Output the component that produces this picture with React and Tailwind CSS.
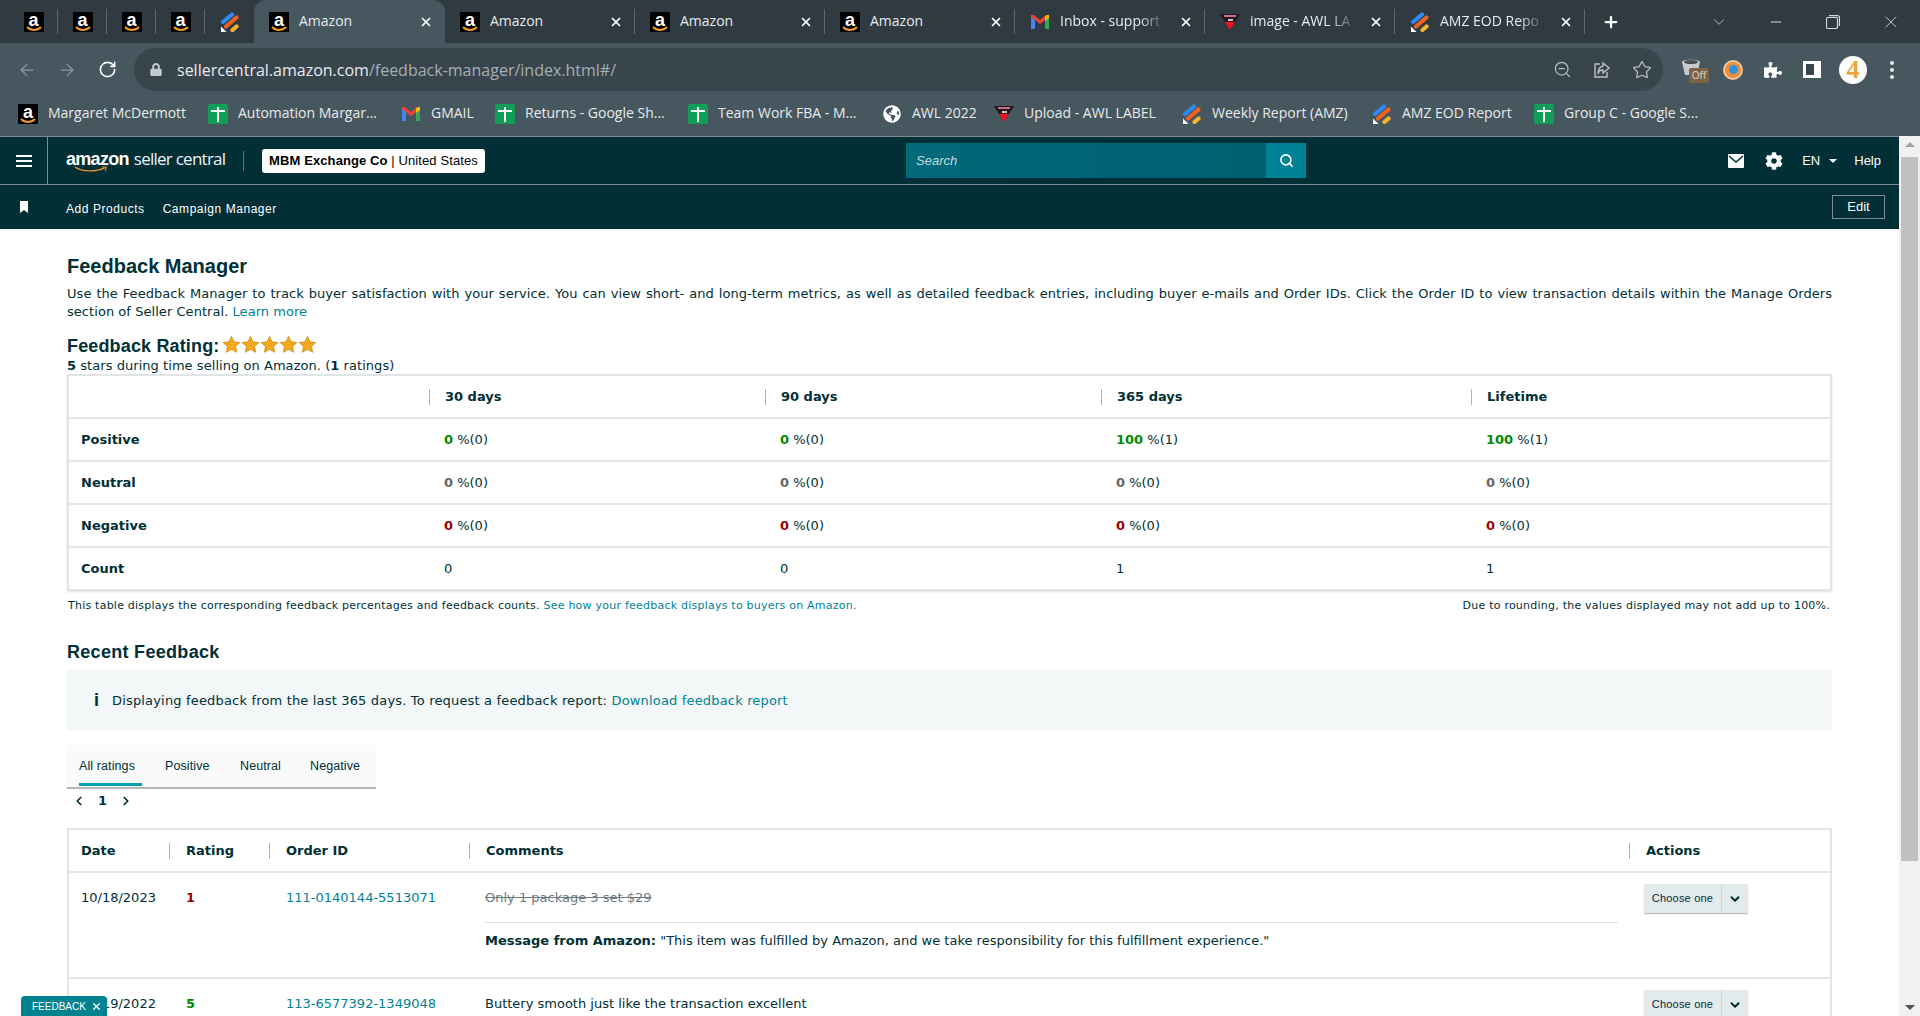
import { ArrowLeft, ArrowRight, RotateCw, Search, ZoomOut, Star, X, Plus, Minus, ChevronDown, ChevronLeft, ChevronRight } from 'lucide-react'
import { FaCog, FaPuzzlePiece, FaGlobeAmericas, FaLock } from 'react-icons/fa'

const chrome = "font-['Open_Sans',sans-serif]"
const body = "font-['DejaVu_Sans',sans-serif]"
const arial = "font-['Liberation_Sans',sans-serif]"

function AmazonIcon() {
  return (
    <div className="relative w-5 h-5 shrink-0 bg-black">
      <div className={`${arial} text-white font-bold text-[18px] leading-[18px] -mt-[1px] text-center`}>a</div>
      <svg viewBox="0 0 20 20" className="absolute inset-0 w-5 h-5">
        <path d="M3 15 C7 19 13 19 17 15" fill="none" stroke="#f09a1f" strokeWidth="2" />
      </svg>
    </div>
  )
}

function JiraIcon() {
  return (
    <svg viewBox="0 0 20 20" className="w-5 h-5 shrink-0">
      <path d="M3 10 L12 2.5" fill="none" stroke="#2f8af5" strokeWidth="4.2" strokeLinecap="round" />
      <path d="M6 14.5 L16.5 5.5" fill="none" stroke="#f2621f" strokeWidth="4.2" strokeLinecap="round" />
      <path d="M12.5 18 L16.5 14.5" fill="none" stroke="#f7b32b" strokeWidth="4.2" strokeLinecap="round" />
      <path d="M1 14.5 L6.5 20 H1 Z" fill="#ffffff" />
    </svg>
  )
}

function SheetIcon() {
  return (
    <div className="relative w-5 h-5 shrink-0 rounded-[2px] bg-[#0f9d58]">
      <div className="absolute left-[9px] top-[3px] w-[2px] h-[15px] bg-white" />
      <div className="absolute left-[3px] top-[6px] w-[14px] h-[2px] bg-white" />
    </div>
  )
}

function GmailIcon() {
  return (
    <svg viewBox="0 0 18 14" className="w-[18px] h-[14px] shrink-0">
      <path d="M0 2 L9 9 L18 2 V0 H15 L9 5 L3 0 H0 Z" fill="#ea4335" />
      <path d="M0 2 V14 H4 V5 Z" fill="#4285f4" />
      <path d="M18 2 V14 H14 V5 Z" fill="#34a853" />
      <path d="M14 1.5 L16 0 H18 V3 L14 6 Z" fill="#fbbc04" />
    </svg>
  )
}

function AwlIcon() {
  return (
    <svg viewBox="0 0 20 16" className="w-5 h-4 shrink-0">
      <path d="M0 0 H20 L10 16 Z" fill="#241a1e" />
      <rect x="4" y="1" width="12" height="2" fill="#c96d8d" />
      <rect x="8" y="5" width="5" height="2" fill="#e6b8c4" />
      <path d="M5 8 H15 L10 16 Z" fill="#ee1622" />
    </svg>
  )
}

function GlobeIcon() {
  return <FaGlobeAmericas className="w-[18px] h-[18px] shrink-0 text-white" />
}

const tabs = [
  { icon: <AmazonIcon />, label: 'Amazon', active: true },
  { icon: <AmazonIcon />, label: 'Amazon' },
  { icon: <AmazonIcon />, label: 'Amazon' },
  { icon: <AmazonIcon />, label: 'Amazon' },
  { icon: <GmailIcon />, label: 'Inbox - support' },
  { icon: <AwlIcon />, label: 'image - AWL LA' },
  { icon: <JiraIcon />, label: 'AMZ EOD Repo' },
]

const bookmarks = [
  { icon: <AmazonIcon />, label: 'Margaret McDermott', w: 'w-[190px]' },
  { icon: <SheetIcon />, label: 'Automation Margar...', w: 'w-[193px]' },
  { icon: <GmailIcon />, label: 'GMAIL', w: 'w-[94px]' },
  { icon: <SheetIcon />, label: 'Returns - Google Sh...', w: 'w-[193px]' },
  { icon: <SheetIcon />, label: 'Team Work FBA - M...', w: 'w-[194px]' },
  { icon: <GlobeIcon />, label: 'AWL 2022', w: 'w-[112px]' },
  { icon: <AwlIcon />, label: 'Upload - AWL LABEL', w: 'w-[188px]' },
  { icon: <JiraIcon />, label: 'Weekly Report (AMZ)', w: 'w-[190px]' },
  { icon: <JiraIcon />, label: 'AMZ EOD Report', w: 'w-[162px]' },
  { icon: <SheetIcon />, label: 'Group C - Google S...', w: 'w-[180px]' },
]

function TabStrip() {
  return (
    <div className={`${chrome} h-[43px] bg-[#2f3a41] flex items-end pl-[9px] text-[14px] text-[#e8eaed]`}>
      {[0, 1, 2, 3, 4].map((i) => (
        <div key={i} className="w-[49px] h-[43px] flex items-center justify-center relative">
          {i < 4 ? <AmazonIcon /> : <JiraIcon />}
          {i < 4 && <div className="absolute right-0 top-[9px] w-px h-[25px] bg-[#5d6a71]" />}
        </div>
      ))}
      {tabs.map((t, i) => (
        <div
          key={i}
          className={`h-[43px] relative flex items-center pl-[15px] pr-[12px] ${i === 0 ? 'w-[191px] bg-[#47575f] rounded-t-[12px]' : 'w-[190px]'}`}
        >
          <div className="w-5 flex justify-center shrink-0">{t.icon}</div>
          <div className={`ml-[10px] -mt-[2px] w-[106px] whitespace-nowrap ${i > 3 ? '[mask-image:linear-gradient(to_right,black_75%,transparent)]' : ''}`}>{t.label}</div>
          <X className="w-[14px] h-[14px] ml-auto text-white" strokeWidth={3} />
          {i > 0 && <div className="absolute right-0 top-[9px] w-px h-[25px] bg-[#5d6a71]" />}
        </div>
      ))}
      <div className="h-[43px] flex items-center ml-[17px] w-[108px]">
        <Plus className="w-[18px] h-[18px] text-white" strokeWidth={3} />
      </div>
      <div className="h-[43px] flex items-center text-[#d5d9dc]">
        <ChevronDown className="w-[18px] h-[18px]" strokeWidth={1} />
        <Minus className="w-[16px] h-[16px] ml-[40px]" strokeWidth={1.5} />
        <svg viewBox="0 0 14 14" className="w-[14px] h-[14px] ml-[42px]" fill="none" stroke="currentColor" strokeWidth="1.2">
          <rect x="0.5" y="2.5" width="11" height="11" rx="1.5" />
          <path d="M3 0.6 H11.5 Q13.5 0.6 13.5 2.6 V11" />
        </svg>
        <X className="w-[20px] h-[20px] ml-[41px]" strokeWidth={1} />
      </div>
    </div>
  )
}

function Toolbar() {
  return (
    <div className="h-[48px] bg-[#47575f] flex items-start pt-[5px] relative">
      <div className="h-[43px] flex items-center text-[#8d999f] pl-[17px]">
        <ArrowLeft className="w-5 h-5" strokeWidth={1.5} />
        <ArrowRight className="w-5 h-5 ml-[20px]" strokeWidth={1.5} />
        <RotateCw className="w-[19px] h-[19px] ml-[21px] text-white" strokeWidth={2} />
      </div>
      <div className={`${chrome} ml-[17px] w-[1529px] h-[43px] rounded-full bg-[#38454d] flex items-center pl-[16px] pr-[11px] text-[16px]`}>
        <FaLock className="w-[12px] h-[13px] text-[#c3c9cc]" />
        <div className="ml-[15px] tracking-[0px] text-[#e8eaed]">
          sellercentral.amazon.com<span className="text-[#a5afb4]">/feedback-manager/index.html#/</span>
        </div>
        <div className="ml-auto flex items-center text-[#b9c0c4]">
          <ZoomOut className="w-[19px] h-[19px]" strokeWidth={1.5} />
          <svg viewBox="0 0 20 20" className="w-5 h-5 ml-[20px]" fill="none" stroke="currentColor" strokeWidth="1.4">
            <path d="M8 4 H3 V17 H15 V12" />
            <path d="M11 3 L17 8 L11 13 V10 C8 10 6.5 11.5 6 14 C6 9 8 6.5 11 6 Z" />
          </svg>
          <Star className="w-5 h-5 ml-[20px]" strokeWidth={1.5} />
        </div>
      </div>
      <div className="h-[43px] flex items-center ml-[18px] text-white">
        <div className="relative w-5 h-5 -mt-[5px]">
          <svg viewBox="0 0 20 20" className="w-5 h-5">
            <path d="M1 5 C1 2 19 2 19 5 L16 18 H4 Z" fill="#c8cbcd" />
            <ellipse cx="10" cy="5" rx="7" ry="2" fill="#4d4d4d" />
          </svg>
          <div className="absolute left-[8px] top-[11px] w-[20px] h-[15px] rounded-[2px] bg-[#7d6244] text-[10px] leading-[15px] text-center text-[#d8d2c8]">Off</div>
        </div>
        <div className="ml-[22px] w-5 h-5 rounded-full bg-[#ec8f3f] border-[2px] border-[#f2c79a] flex items-center justify-center">
          <div className="w-[9px] h-[9px] rounded-full bg-[#2f93d6]" />
        </div>
        <FaPuzzlePiece className="w-[18px] h-[18px] ml-[21px]" />
        <div className="w-[18px] h-[17px] ml-[21px] border-y-[3px] border-l-[3px] border-r-[7px] border-white bg-[#38454d]" />
        <div className="ml-[18px] w-[28px] h-[28px] rounded-full bg-white flex items-center justify-center font-['Liberation_Serif',serif] text-[#eda43b] text-[26px] leading-none font-bold">4</div>
        <div className="ml-[23px] flex flex-col gap-[3px]">
          <div className="w-[4px] h-[4px] rounded-full bg-[#e8eaed]" />
          <div className="w-[4px] h-[4px] rounded-full bg-[#e8eaed]" />
          <div className="w-[4px] h-[4px] rounded-full bg-[#e8eaed]" />
        </div>
      </div>
    </div>
  )
}

function BookmarkBar() {
  return (
    <div className={`${chrome} h-[45px] bg-[#47575f] flex items-center pl-[18px] text-[14px] text-[#e8eaed]`}>
      {bookmarks.map((b) => (
        <div key={b.label} className={`${b.w} flex items-center whitespace-nowrap`}>
          <div className="w-5 flex justify-center shrink-0">{b.icon}</div>
          <span className="ml-[10px] -mt-[2px]">{b.label}</span>
        </div>
      ))}
    </div>
  )
}

function SellerHeader() {
  return (
    <div className={`${arial} text-white`}>
      <div className="h-[49px] bg-[#002f36] border-t border-[#7c8c90] border-b flex items-center">
        <div className="w-[48px] h-full border-r border-[#7c8c90] flex flex-col items-center justify-center gap-[3px]">
          <div className="w-4 h-[2px] bg-white" />
          <div className="w-4 h-[2px] bg-white" />
          <div className="w-4 h-[2px] bg-white" />
        </div>
        <div className="relative ml-[18px] w-[160px] h-[30px] flex items-start whitespace-nowrap">
          <span className="font-bold text-[18px] leading-[26px] tracking-[-0.7px]">amazon</span>
          <span className="ml-[5px] font-['Open_Sans',sans-serif] text-[17px] leading-[25px] tracking-[-0.75px] text-[#eef2f3]">seller central</span>
          <svg viewBox="0 0 40 8" className="absolute left-[8px] top-[20px] w-[34px] h-[7px]">
            <path d="M1 1 C10 7 26 7 36 2" fill="none" stroke="#e8932d" strokeWidth="1.6" />
            <path d="M33 1 L38 1 L37 6" fill="none" stroke="#e8932d" strokeWidth="1.2" />
          </svg>
        </div>
        <div className="ml-[17px] w-px h-[20px] bg-[#5c757b]" />
        <div className="ml-[18px] h-[24px] w-[223px] bg-white rounded-[3px] text-black text-[13px] tracking-[0.1px] flex items-center justify-center whitespace-nowrap">
          <b>MBM Exchange Co</b>&nbsp;|&nbsp;United States
        </div>
        <div className="ml-[421px] w-[400px] h-[35px] flex">
          <div className="flex-1 bg-[linear-gradient(to_right,#00697a,#006070)] pl-[10px] text-[13px] italic leading-[35px] text-[#c4dde1]">Search</div>
          <div className="w-[40px] bg-[#008296] flex items-center justify-center">
            <Search className="w-[15px] h-[15px]" strokeWidth={2.5} />
          </div>
        </div>
        <div className="ml-auto flex items-center pr-[18px] text-[13px]">
          <svg viewBox="0 0 18 16" className="w-[18px] h-[16px]">
            <path d="M2 1 H16 Q17 1 17 2 V14 Q17 15 16 15 H2 Q1 15 1 14 V2 Q1 1 2 1 Z" fill="white" />
            <path d="M2 3 L9 9 L16 3" fill="none" stroke="#002f36" strokeWidth="1.5" />
          </svg>
          <FaCog className="w-[18px] h-[18px] ml-[20px]" />
          <span className="ml-[19px]">EN</span>
          <div className="ml-[9px] w-0 h-0 border-x-[4px] border-x-transparent border-t-[4px] border-t-white" />
          <span className="ml-[17px]">Help</span>
        </div>
      </div>
      <div className="h-[44px] bg-[#002f36] flex items-center text-[12px] tracking-[0.55px]">
        <svg viewBox="0 0 10 12" className="ml-[19px] w-[10px] h-[12px]">
          <path d="M1 0 H9 V12 L5 9 L1 12 Z" fill="white" />
        </svg>
        <span className="ml-[37px] mt-[4px]">Add Products</span>
        <span className="ml-[18px] mt-[4px]">Campaign Manager</span>
        <div className="ml-auto mr-[14px] w-[53px] h-[24px] border border-[#7c8c90] text-center text-[13px] leading-[22px] tracking-normal">Edit</div>
      </div>
    </div>
  )
}

function Stars() {
  return (
    <div className="flex ml-[3px] -mt-[4px]">
      {[0, 1, 2, 3, 4].map((i) => (
        <svg key={i} viewBox="0 0 20 20" className="w-[19px] h-[19px]">
          <path d="M10 1.5 L12.6 7.2 L18.8 7.9 L14.2 12.1 L15.5 18.2 L10 15.1 L4.5 18.2 L5.8 12.1 L1.2 7.9 L7.4 7.2 Z" fill="#f5a81c" stroke="#c9860f" strokeWidth="0.8" />
        </svg>
      ))}
    </div>
  )
}

const metricRows = [
  { label: 'Positive', color: 'text-[#008a00]', vals: [['0', '(0)'], ['0', '(0)'], ['100', '(1)'], ['100', '(1)']] },
  { label: 'Neutral', color: 'text-[#666666]', vals: [['0', '(0)'], ['0', '(0)'], ['0', '(0)'], ['0', '(0)']] },
  { label: 'Negative', color: 'text-[#a00000]', vals: [['0', '(0)'], ['0', '(0)'], ['0', '(0)'], ['0', '(0)']] },
]

const metricGrid = 'grid grid-cols-[360px_336px_336px_370px_1fr] items-center'

function MetricsTable() {
  return (
    <div className="border-2 border-[#dfe5e5] shadow-[0_1px_2px_rgba(0,0,0,0.12)] text-[13px] leading-[16px] text-[#002f36]">
      <div className={`${metricGrid} h-[41px] font-bold`}>
        <div />
        {['30 days', '90 days', '365 days', 'Lifetime'].map((h) => (
          <div key={h} className="border-l border-[#a8b8bb] pl-[15px] h-[16px]">{h}</div>
        ))}
      </div>
      {metricRows.map((r) => (
        <div key={r.label} className={`${metricGrid} h-[43px] border-t-2 border-[#e3e6e6]`}>
          <div className="pl-[12px] font-bold">{r.label}</div>
          {r.vals.map((v, i) => (
            <div key={i} className="pl-[15px]">
              <span className={`${r.color} font-bold`}>{v[0]}</span> %{v[1]}
            </div>
          ))}
        </div>
      ))}
      <div className={`${metricGrid} h-[43px] border-t-2 border-[#e3e6e6]`}>
        <div className="pl-[12px] font-bold">Count</div>
        {['0', '0', '1', '1'].map((v, i) => (
          <div key={i} className="pl-[15px]">{v}</div>
        ))}
      </div>
    </div>
  )
}

const feedbackGrid = 'grid grid-cols-[100px_100px_200px_1160px_1fr]'

function ChooseOne() {
  return (
    <div className={`${arial} w-[104px] h-[29px] bg-[#e3eaec] rounded-[2px] shadow-[0_1px_1px_rgba(0,0,0,0.3)] flex items-center text-[11px] text-[#002f36]`}>
      <div className="w-[78px] text-center border-r border-[#ccd5d7] leading-[29px] tracking-[0.2px]">Choose one</div>
      <div className="flex-1 flex justify-center">
        <ChevronDown className="w-[14px] h-[14px]" strokeWidth={3.5} />
      </div>
    </div>
  )
}

function FeedbackTable() {
  return (
    <div className="border-2 border-[#dfe5e5] border-b-0 text-[13px] leading-[16px] text-[#002f36] h-[200px]">
      <div className={`${feedbackGrid} h-[41px] items-center font-bold`}>
        <div className="pl-[12px]">Date</div>
        <div className="border-l border-[#a8b8bb] pl-[16px] h-[16px]">Rating</div>
        <div className="border-l border-[#a8b8bb] pl-[16px] h-[16px]">Order ID</div>
        <div className="border-l border-[#a8b8bb] pl-[16px] h-[16px]">Comments</div>
        <div className="border-l border-[#a8b8bb] pl-[16px] h-[16px]">Actions</div>
      </div>
      <div className={`${feedbackGrid} h-[106px] border-t-2 border-[#e3e6e6] pt-[17px]`}>
        <div className="pl-[12px]">10/18/2023</div>
        <div className="pl-[17px] font-bold text-[#a00000]">1</div>
        <div className="pl-[17px] text-[#008296]">111-0140144-5513071</div>
        <div className="pl-[16px]">
          <div className="line-through text-[#6c7b80]">Only 1 package 3 set $29</div>
          <div className="mt-[16px] mr-[11px] border-t border-[#dde1e1] pt-[10px]">
            <b>Message from Amazon:</b> "This item was fulfilled by Amazon, and we take responsibility for this fulfillment experience."
          </div>
        </div>
        <div className="pl-[15px] -mt-[6px]"><ChooseOne /></div>
      </div>
      <div className={`${feedbackGrid} border-t-2 border-[#e3e6e6] pt-[17px]`}>
        <div className="pl-[12px]">10/19/2022</div>
        <div className="pl-[17px] font-bold text-[#008a00]">5</div>
        <div className="pl-[17px] text-[#008296]">113-6577392-1349048</div>
        <div className="pl-[16px]">Buttery smooth just like the transaction excellent</div>
        <div className="pl-[15px] -mt-[6px]"><ChooseOne /></div>
      </div>
    </div>
  )
}

export default function App() {
  return (
    <div className="relative w-[1920px] h-[1016px] overflow-hidden bg-white flex flex-col">
      <TabStrip />
      <Toolbar />
      <BookmarkBar />
      <div className="flex-1 flex min-h-0">
        <div className="flex-1 min-w-0 flex flex-col">
          <SellerHeader />
          <main className={`${body} flex-1 pl-[67px] pr-[67px] pt-[25px] text-[#002f36]`}>
            <h1 className={`${arial} text-[20px] leading-[24px] font-bold`}>Feedback Manager</h1>
            <p className="mt-[7px] text-[13px] leading-[18px] text-justify tracking-[0.05px]">
              Use the Feedback Manager to track buyer satisfaction with your service. You can view short- and long-term metrics, as well as detailed feedback entries, including buyer e-mails and Order IDs. Click the Order ID to view transaction details within the Manage Orders section of Seller Central. <span className="text-[#008296]">Learn more</span>
            </p>
            <div className="mt-[13px] flex items-center h-[24px]">
              <h2 className={`${arial} text-[18px] leading-[24px] font-bold tracking-[0.15px]`}>Feedback Rating:</h2>
              <Stars />
            </div>
            <p className="text-[13px] leading-[16px] tracking-[0.05px]"><b>5</b> stars during time selling on Amazon. (<b>1</b> ratings)</p>
            <MetricsTable />
            <div className="mt-[7px] pl-px pr-[2px] flex justify-between text-[11px] leading-[16px] tracking-[0.23px]">
              <span>This table displays the corresponding feedback percentages and feedback counts. <span className="text-[#008296]">See how your feedback displays to buyers on Amazon.</span></span>
              <span>Due to rounding, the values displayed may not add up to 100%.</span>
            </div>
            <h2 className={`${arial} mt-[26px] text-[18px] leading-[24px] font-bold tracking-[0.3px]`}>Recent Feedback</h2>
            <div className="mt-[6px] h-[60px] bg-[#f3f7f8] flex items-center pl-[27px] pt-px text-[13px]">
              <span className={`${arial} font-bold text-[18px] leading-none mr-[13px] -mt-[1px]`}>i</span>
              <span className="tracking-[0.17px]">Displaying feedback from the last 365 days. To request a feedback report: <span className="text-[#008296]">Download feedback report</span></span>
            </div>
            <div className={`${arial} mt-[15px] w-[309px] h-[44px] bg-[#fafafa] border-b-2 border-[#b5b8b8] flex text-[12.5px] tracking-[0.1px] pl-[12px] relative`}>
              <div className="w-[63px] border-b-[3px] border-[#00a0ac] h-[41px] leading-[42px] mr-[23px]">All ratings</div>
              <div className="w-[75px] leading-[42px]">Positive</div>
              <div className="w-[70px] leading-[42px]">Neutral</div>
              <div className="leading-[42px]">Negative</div>
            </div>
            <div className="mt-[2px] h-[20px] flex items-center pl-[5px] text-[13px] font-bold">
              <ChevronLeft className="w-[14px] h-[14px]" strokeWidth={3} />
              <span className="ml-[12px]">1</span>
              <ChevronRight className="w-[14px] h-[14px] ml-[12px]" strokeWidth={3} />
            </div>
            <div className="mt-[17px]">
              <FeedbackTable />
            </div>
          </main>
        </div>
        <div className="w-[21px] bg-[#f1f1f1] flex flex-col items-center pt-[6px]">
          <div className="w-0 h-0 border-x-[5px] border-x-transparent border-b-[5px] border-b-[#a3a3a3]" />
          <div className="mt-[10px] w-[17px] h-[704px] bg-[#c1c1c1]" />
          <div className="mt-auto mb-[6px] w-0 h-0 border-x-[5px] border-x-transparent border-t-[5px] border-t-[#505050]" />
        </div>
      </div>
      <div className={`${arial} absolute left-[21px] bottom-0 w-[86px] h-[20px] rounded-t-[4px] bg-[#00838f] text-white text-[10px] leading-[21px] pl-[11px] flex items-center`}>
        FEEDBACK
        <X className="w-[11px] h-[11px] ml-[5px]" strokeWidth={3} />
      </div>
    </div>
  )
}
